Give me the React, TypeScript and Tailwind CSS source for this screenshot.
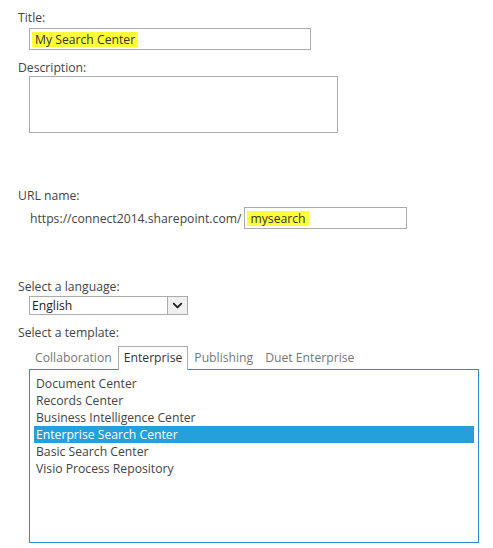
import { ChevronDown } from "lucide-react"

const templates = [
    'Document Center',
    'Records Center',
    'Business Intelligence Center',
    'Enterprise Search Center',
    'Basic Search Center',
    'Visio Process Repository',
]

export default function App() {
    return (
        <div className="w-[493px] h-[548px] bg-white text-[#444] text-[12.2px] leading-[17px] font-['Open_Sans',sans-serif] pl-[18px] pt-[9px]">

            <div>Title:</div>
            <div className="ml-[11px] mt-[2px] w-[282px] h-[22px] border border-[#ababab] flex items-center pl-[2px]">
                <span className="bg-[#ffff3a] text-[#333] px-[3px] leading-[15px]">My Search Center</span>
            </div>

            <div className="mt-[9px]">Description:</div>
            <div className="ml-[11px] w-[309px] h-[57px] border border-[#ababab]" />

            <div className="mt-[54px]">URL name:</div>
            <div className="flex items-center mt-[3px] ml-[12px]">
                <span>https://connect2014.sharepoint.com/</span>
                <div className="ml-[3px] w-[163px] h-[22px] border border-[#ababab] flex items-center pl-[2px]">
                    <span className="bg-[#ffff3a] text-[#333] px-[3px] leading-[15px]">mysearch</span>
                </div>
            </div>

            <div className="mt-[49px]">Select a language:</div>
            <div className="ml-[11px] mt-[1px] w-[159px] h-[19px] border border-[#ababab] flex items-stretch text-[#222]">
                <div className="flex-1 pl-[2px] leading-[17px]">English</div>
                <div className="w-[20px] bg-[#f0f0f0] border-l border-[#ababab] flex items-center justify-center">
                    <ChevronDown size={15} strokeWidth={3} color="#222" />
                </div>
            </div>

            <div className="mt-[9px]">Select a template:</div>
            <div className="ml-[11px] mt-[5px] flex items-end h-[23px] text-[#777]">
                <div className="px-[6px] h-[22px] leading-[21px]">Collaboration</div>
                <div className="px-[5px] h-[24px] leading-[22px] border border-b-0 border-[#ababab] bg-white text-[#333] relative top-[1px]">Enterprise</div>
                <div className="px-[6px] h-[22px] leading-[21px]">Publishing</div>
                <div className="px-[6px] h-[22px] leading-[21px]">Duet Enterprise</div>
            </div>
            <div className="ml-[11px] w-[450px] h-[174px] border border-[#2a8dd4] pt-[5px] px-[4px]">
                {templates.map((t) => (
                    <div
                        key={t}
                        className={`pl-[2px] h-[17px] leading-[17px] ${t === 'Enterprise Search Center' ? 'bg-[#26a0da] text-white' : 'text-[#444]'}`}
                    >
                        {t}
                    </div>
                ))}
            </div>
        </div>
    )
}
